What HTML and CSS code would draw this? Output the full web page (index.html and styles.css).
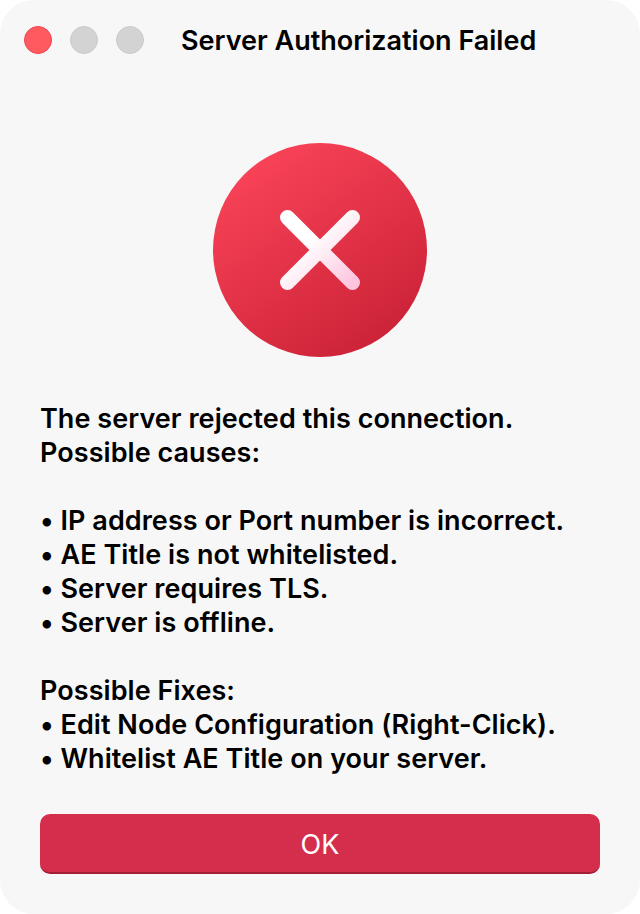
FILE: index.html
```html
<!DOCTYPE html>
<html lang="en">
<head>
    <meta charset="UTF-8">
    <meta name="viewport" content="width=device-width, initial-scale=1.0">
    <title>Server Authorization Failed</title>
    <link rel="stylesheet" href="styles.css">
</head>
<body>
    <div class="window">
        <div class="titlebar">
            <div class="lights">
                <span class="light close"></span>
                <span class="light"></span>
                <span class="light"></span>
            </div>
            <h1 class="title">Server Authorization Failed</h1>
        </div>
        <div class="icon-wrap">
            <svg class="error-icon" width="214" height="214" viewBox="0 0 214 214">
                <defs>
                    <linearGradient id="discFill" x1="0.2" y1="0.05" x2="0.8" y2="0.95">
                        <stop offset="0" stop-color="#f94358"/>
                        <stop offset="1" stop-color="#cb2237"/>
                    </linearGradient>
                    <linearGradient id="crossFill" gradientUnits="userSpaceOnUse" x1="74" y1="74" x2="140" y2="140">
                        <stop offset="0" stop-color="#ffffff"/>
                        <stop offset="0.35" stop-color="#ffffff"/>
                        <stop offset="1" stop-color="#fdc4de"/>
                    </linearGradient>
                </defs>
                <circle cx="107" cy="107" r="107" fill="url(#discFill)"/>
                <path d="M74.5 74.5L139.5 139.5M139.5 74.5L74.5 139.5" fill="none" stroke="url(#crossFill)" stroke-width="15" stroke-linecap="round"/>
            </svg>
        </div>
        <div class="message">
            <p>The server rejected this connection.<br>Possible causes:</p>
            <p>• IP address or Port number is incorrect.<br>• AE Title is not whitelisted.<br>• Server requires TLS.<br>• Server is offline.</p>
            <p>Possible Fixes:<br>• Edit Node Configuration (Right-Click).<br>• Whitelist AE Title on your server.</p>
        </div>
        <button class="ok-button">OK</button>
    </div>
</body>
</html>
```

FILE: styles.css
```css
html, body {
    margin: 0;
    background: #ffffff;
}
.window {
    box-sizing: border-box;
    width: 640px;
    height: 914px;
    padding: 26px 40px 0;
    background: #f7f7f7;
    border-radius: 34px;
    font-family: Inter, "Noto Sans", sans-serif;
    color: #000000;
    overflow: hidden;
}
.titlebar {
    display: flex;
    align-items: center;
    height: 28px;
    margin: 0 -16px;
}
.lights {
    display: flex;
    gap: 18px;
}
.light {
    box-sizing: border-box;
    width: 28px;
    height: 28px;
    border-radius: 50%;
    background: #d3d3d3;
    border: 1px solid #c9c9c9;
}
.light.close {
    background: #ff5a5f;
    border-color: #f0414a;
}
.title {
    margin: 2px 0 0 37px;
    font-size: 27px;
    font-weight: 600;
    line-height: 28px;
    white-space: nowrap;
}
.icon-wrap {
    display: flex;
    justify-content: center;
    margin-top: 89px;
}
.error-icon {
    display: block;
}
.message {
    margin-top: 45px;
    font-size: 27px;
    font-weight: 600;
    line-height: 34px;
    letter-spacing: 0.05px;
}
.message p {
    margin: 0 0 34px;
    white-space: nowrap;
}
.message p:last-child {
    margin-bottom: 0;
}
.ok-button {
    display: block;
    box-sizing: border-box;
    width: 100%;
    height: 60px;
    margin-top: 38px;
    padding: 2px 0 0;
    border: 0;
    border-bottom: 2px solid #a11f37;
    border-radius: 10px;
    background: #d52e4c;
    color: #ffffff;
    font-family: Inter, "Noto Sans", sans-serif;
    font-size: 27px;
    font-weight: 400;
}
```
